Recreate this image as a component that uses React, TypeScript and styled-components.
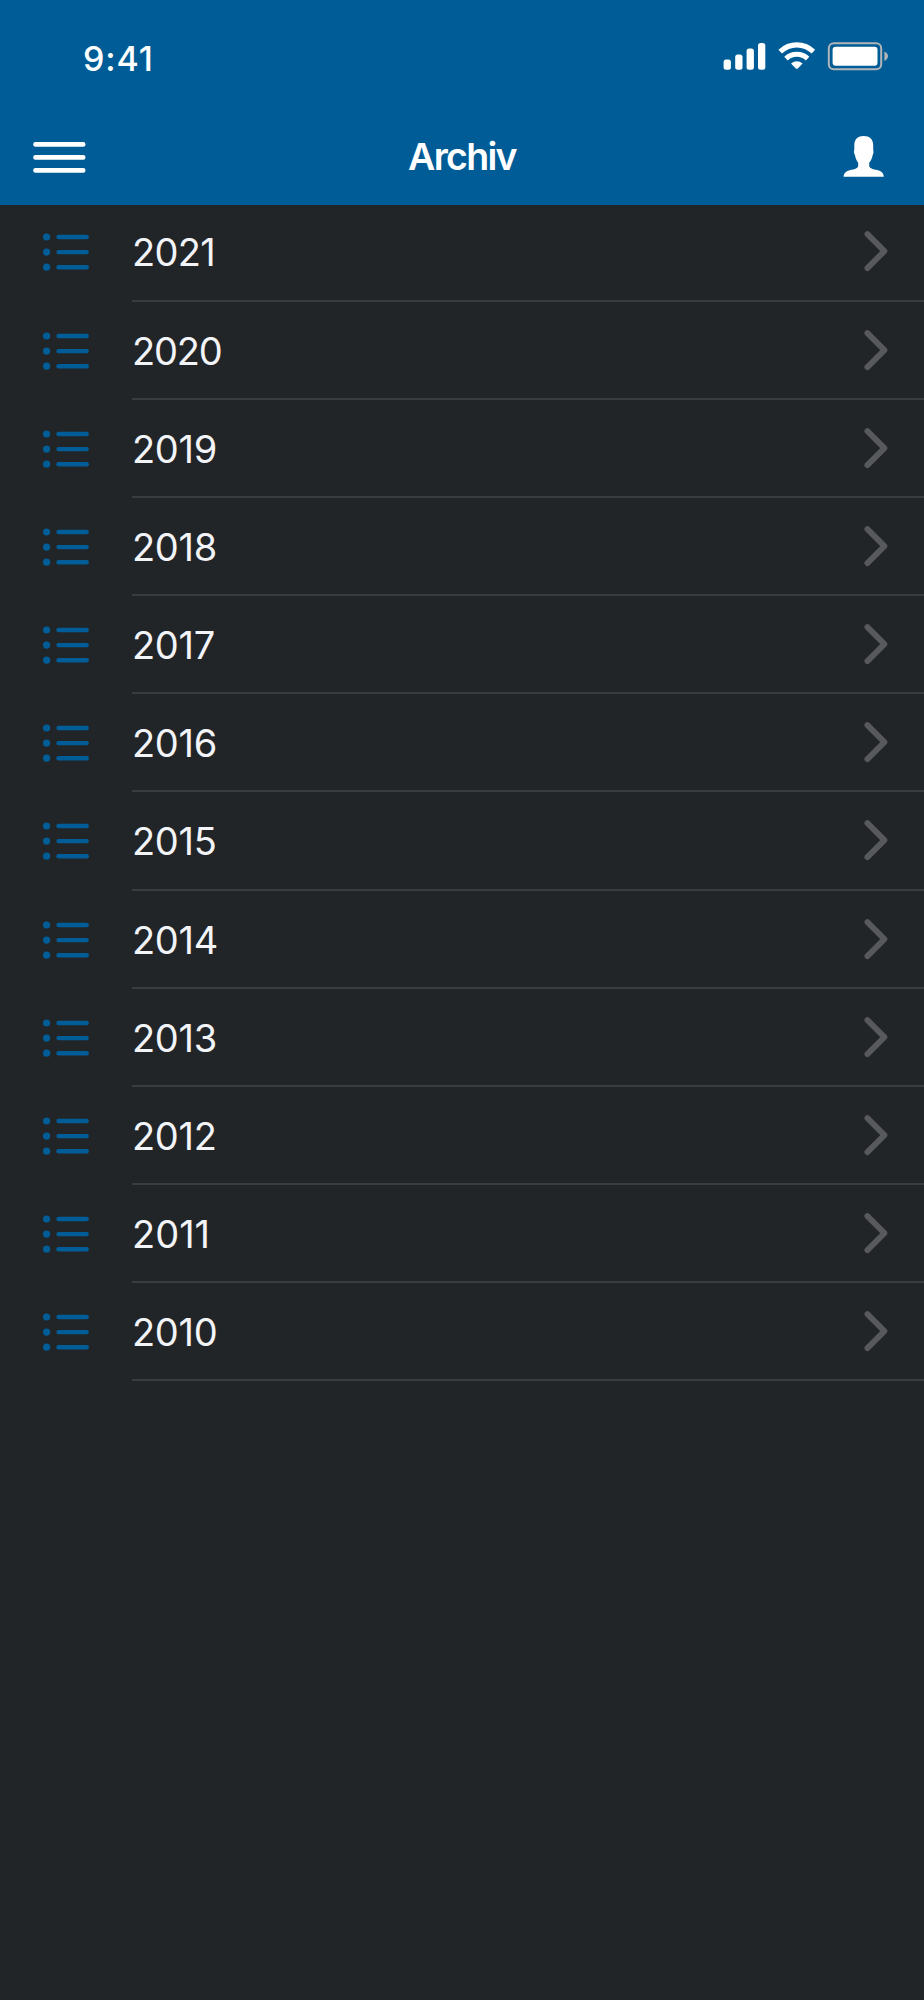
import React from "react";
import styled, { createGlobalStyle } from "styled-components";

const GlobalStyle = createGlobalStyle`
  * { box-sizing: border-box; }
  body {
    margin: 0;
    background: #222528;
    font-family: Inter, "Liberation Sans", sans-serif;
  }
`;

const Screen = styled.div`
  width: 924px;
  height: 2000px;
  overflow: hidden;
  background: #222528;
`;

const Header = styled.header`
  height: 205px;
  background: #005c96;
  color: #fff;
`;

const StatusBar = styled.div`
  height: 98px;
  padding: 19px 35px 0 83px;
  display: flex;
  justify-content: space-between;
`;

const Clock = styled.time`
  height: 80px;
  line-height: 80px;
  font-size: 34px;
  font-weight: 500;
  letter-spacing: 0.9px;
`;

const StatusIcons = styled.svg`
  width: 168px;
  height: 36px;
  margin-top: 19px;
`;

const NavBar = styled.nav`
  height: 107px;
  display: grid;
  grid-template-columns: 120px 1fr 120px;
  align-items: start;
`;

const IconButton = styled.button`
  display: block;
  padding: 0;
  border: 0;
  background: none;
  color: inherit;
`;

const Glyph = styled.svg`
  display: block;
`;

const Title = styled.h1`
  margin: 0;
  height: 107px;
  line-height: 117px;
  text-align: center;
  font-size: 37.5px;
  font-weight: 600;
  letter-spacing: -1.7px;
`;

const List = styled.ul`
  margin: 0;
  padding: 0;
  list-style: none;
`;

const Row = styled.li`
  height: 98.18px;
  display: grid;
  grid-template-columns: 132px 1fr;
  grid-template-rows: 100%;

  &:first-child {
    margin-top: -1.6px;
  }
`;

const RowBody = styled.div`
  display: flex;
  justify-content: space-between;
  border-bottom: 2px solid #3b3c40;
`;

const Year = styled.span<{ $tracking: number }>`
  line-height: 98px;
  font-size: 38px;
  font-kerning: none;
  letter-spacing: ${({ $tracking }) => $tracking}px;
  color: #f3f4f8;
`;

const years = [2021, 2020, 2019, 2018, 2017, 2016, 2015, 2014, 2013, 2012, 2011, 2010];

// The digit 1 is narrow, so years containing it are set slightly looser.
const trackingFor = (year: number) => {
  const ones = String(year).split("1").length - 1;
  if (ones === 0) return -1.2;
  if (ones === 2) return 0;
  return year > 2020 ? -0.7 : -0.3;
};

const ListIcon = () => (
  <Glyph width="132" height="96" viewBox="0 0 132 96" fill="#005d98" aria-hidden>
    {[34, 49.1, 64.2].map((y) => (
      <g key={y}>
        <circle cx="46.6" cy={y} r="3.6" />
        <rect x="56.3" y={y - 2.2} width="32.6" height="4.4" rx="2.2" />
      </g>
    ))}
  </Glyph>
);

const Chevron = () => (
  <Glyph width="64" height="96" viewBox="860 203 64 96" aria-hidden>
    <path
      d="M867.4 234.1 884.4 251.1 867.4 268.1"
      fill="none"
      stroke="#58595c"
      strokeWidth="5.8"
      strokeLinecap="round"
      strokeLinejoin="round"
    />
  </Glyph>
);

const StatusGlyphs = () => (
  <StatusIcons viewBox="721 38 168 36" fill="#fff" aria-hidden>
    <rect x="723.6" y="59.5" width="7.3" height="10.2" rx="2.5" />
    <rect x="735.2" y="54.5" width="7.3" height="15.2" rx="2.5" />
    <rect x="746.6" y="48.6" width="7.3" height="21.1" rx="2.5" />
    <rect x="758" y="43.1" width="7.3" height="26.6" rx="2.5" />
    <g fill="none" stroke="#fff">
      <path d="M780.2 51.6Q787.4 44.9 796.8 44.9T813.4 51.6" strokeWidth="5.2" />
      <path d="M786 58.6Q790.4 54.3 796.8 54.3T807.6 58.6" strokeWidth="5" />
    </g>
    <path d="M791 63.6Q796.8 58.9 802.6 63.6L797.8 68.4Q796.8 69.3 795.8 68.4Z" />
    <rect x="828.8" y="43.3" width="52.4" height="25.9" rx="5" fill="none" stroke="#b1b5b9" strokeWidth="2" />
    <rect x="832.6" y="46.7" width="44.9" height="19" rx="3" />
    <path d="M884.4 51.4Q888 53.1 888 56.1T884.4 61Z" fill="#b1b5b9" />
  </StatusIcons>
);

export default function App() {
  return (
    <Screen>
      <GlobalStyle />
      <Header>
        <StatusBar>
          <Clock>9:41</Clock>
          <StatusGlyphs />
        </StatusBar>
        <NavBar>
          <IconButton aria-label="Menu">
            <Glyph width="120" height="107" viewBox="0 98 120 107" fill="#fff">
              <rect x="33.2" y="142.1" width="52.3" height="4.6" rx="2.3" />
              <rect x="33.2" y="155.1" width="52.3" height="4.6" rx="2.3" />
              <rect x="33.2" y="168.1" width="52.3" height="4.6" rx="2.3" />
            </Glyph>
          </IconButton>
          <Title>Archiv</Title>
          <IconButton aria-label="Profil">
            <Glyph width="120" height="107" viewBox="804 98 120 107" fill="#fff">
              <path d="M863.7 136C869.5 136 873.2 139.2 873.2 145V150.3C873.9 151 873.4 153.5 872.7 155C872 159 870.8 160.7 869.2 162.8V166.1C870 169 873.3 169.4 877.2 170C881.6 170.9 883.8 173.8 883.8 176.8H843.6C843.6 173.8 846 170.9 850.4 170C854.3 169.4 857.4 169 858.2 166.1V162.8C856.7 160.7 855.6 159 854.9 155C854 153.5 853.5 151 854.3 150.3V145C854.3 139.2 858 136 863.7 136Z" />
            </Glyph>
          </IconButton>
        </NavBar>
      </Header>
      <List>
        {years.map((year) => (
          <Row key={year}>
            <ListIcon />
            <RowBody>
              <Year $tracking={trackingFor(year)}>{year}</Year>
              <Chevron />
            </RowBody>
          </Row>
        ))}
      </List>
    </Screen>
  );
}
